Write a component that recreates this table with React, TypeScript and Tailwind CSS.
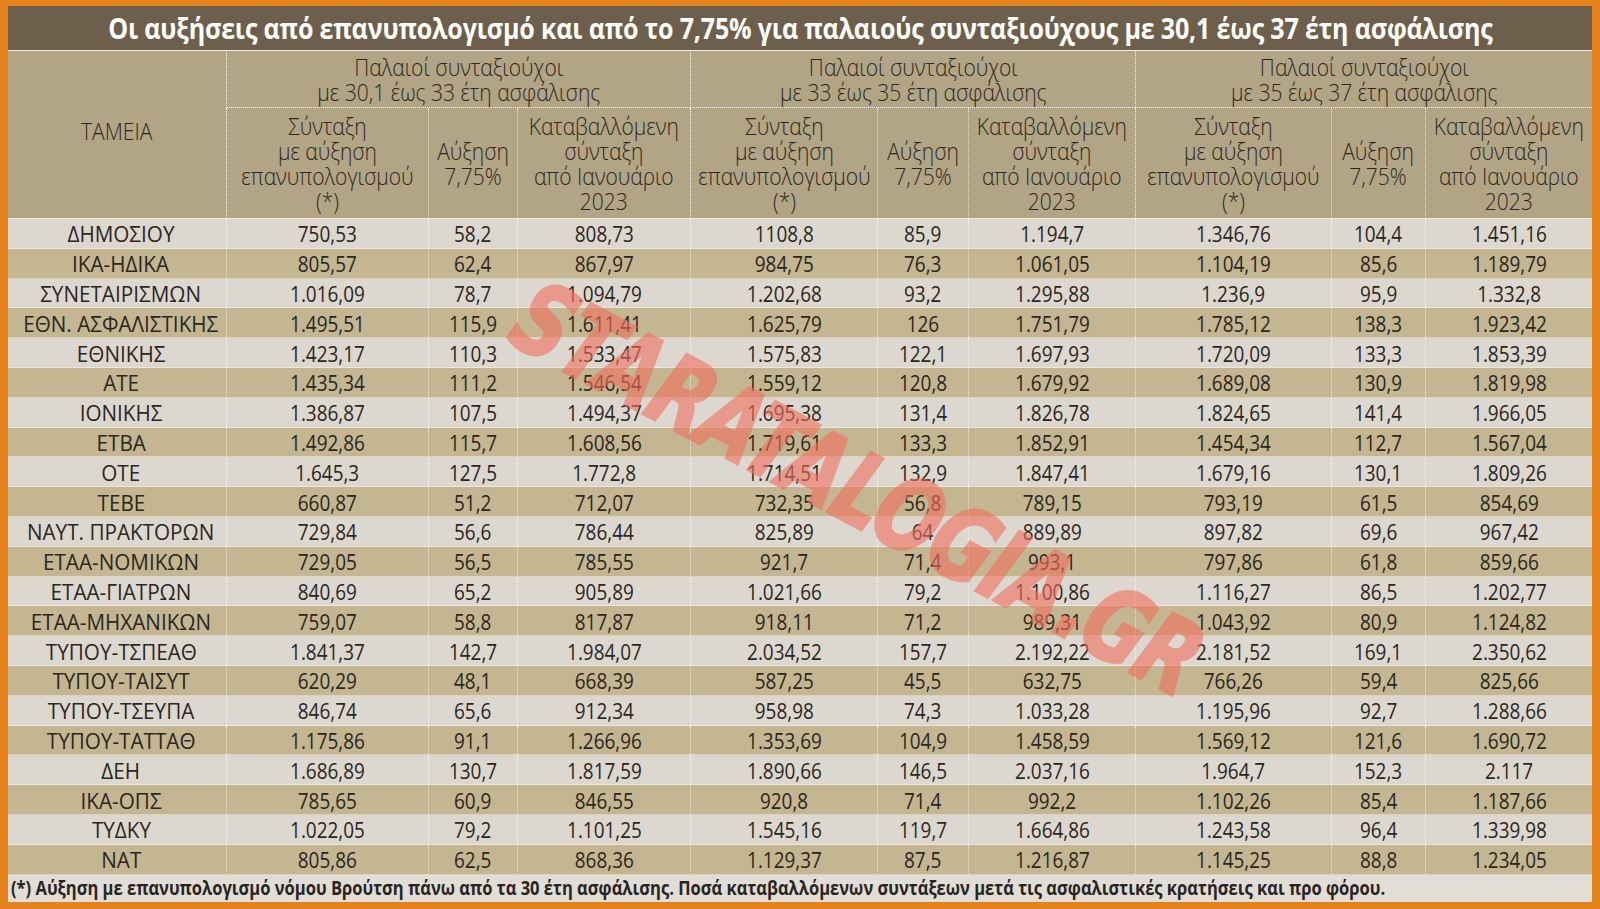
import React from 'react';

const ROWS: string[][] = [
  ['ΔΗΜΟΣΙΟΥ', '750,53', '58,2', '808,73', '1108,8', '85,9', '1.194,7', '1.346,76', '104,4', '1.451,16'],
  ['ΙΚΑ-ΗΔΙΚΑ', '805,57', '62,4', '867,97', '984,75', '76,3', '1.061,05', '1.104,19', '85,6', '1.189,79'],
  ['ΣΥΝΕΤΑΙΡΙΣΜΩΝ', '1.016,09', '78,7', '1.094,79', '1.202,68', '93,2', '1.295,88', '1.236,9', '95,9', '1.332,8'],
  ['ΕΘΝ. ΑΣΦΑΛΙΣΤΙΚΗΣ', '1.495,51', '115,9', '1.611,41', '1.625,79', '126', '1.751,79', '1.785,12', '138,3', '1.923,42'],
  ['ΕΘΝΙΚΗΣ', '1.423,17', '110,3', '1.533,47', '1.575,83', '122,1', '1.697,93', '1.720,09', '133,3', '1.853,39'],
  ['ΑΤΕ', '1.435,34', '111,2', '1.546,54', '1.559,12', '120,8', '1.679,92', '1.689,08', '130,9', '1.819,98'],
  ['ΙΟΝΙΚΗΣ', '1.386,87', '107,5', '1.494,37', '1.695,38', '131,4', '1.826,78', '1.824,65', '141,4', '1.966,05'],
  ['ΕΤΒΑ', '1.492,86', '115,7', '1.608,56', '1.719,61', '133,3', '1.852,91', '1.454,34', '112,7', '1.567,04'],
  ['ΟΤΕ', '1.645,3', '127,5', '1.772,8', '1.714,51', '132,9', '1.847,41', '1.679,16', '130,1', '1.809,26'],
  ['ΤΕΒΕ', '660,87', '51,2', '712,07', '732,35', '56,8', '789,15', '793,19', '61,5', '854,69'],
  ['ΝΑΥΤ. ΠΡΑΚΤΟΡΩΝ', '729,84', '56,6', '786,44', '825,89', '64', '889,89', '897,82', '69,6', '967,42'],
  ['ΕΤΑΑ-ΝΟΜΙΚΩΝ', '729,05', '56,5', '785,55', '921,7', '71,4', '993,1', '797,86', '61,8', '859,66'],
  ['ΕΤΑΑ-ΓΙΑΤΡΩΝ', '840,69', '65,2', '905,89', '1.021,66', '79,2', '1.100,86', '1.116,27', '86,5', '1.202,77'],
  ['ΕΤΑΑ-ΜΗΧΑΝΙΚΩΝ', '759,07', '58,8', '817,87', '918,11', '71,2', '989,31', '1.043,92', '80,9', '1.124,82'],
  ['ΤΥΠΟΥ-ΤΣΠΕΑΘ', '1.841,37', '142,7', '1.984,07', '2.034,52', '157,7', '2.192,22', '2.181,52', '169,1', '2.350,62'],
  ['ΤΥΠΟΥ-ΤΑΙΣΥΤ', '620,29', '48,1', '668,39', '587,25', '45,5', '632,75', '766,26', '59,4', '825,66'],
  ['ΤΥΠΟΥ-ΤΣΕΥΠΑ', '846,74', '65,6', '912,34', '958,98', '74,3', '1.033,28', '1.195,96', '92,7', '1.288,66'],
  ['ΤΥΠΟΥ-ΤΑΤΤΑΘ', '1.175,86', '91,1', '1.266,96', '1.353,69', '104,9', '1.458,59', '1.569,12', '121,6', '1.690,72'],
  ['ΔΕΗ', '1.686,89', '130,7', '1.817,59', '1.890,66', '146,5', '2.037,16', '1.964,7', '152,3', '2.117'],
  ['ΙΚΑ-ΟΠΣ', '785,65', '60,9', '846,55', '920,8', '71,4', '992,2', '1.102,26', '85,4', '1.187,66'],
  ['ΤΥΔΚΥ', '1.022,05', '79,2', '1.101,25', '1.545,16', '119,7', '1.664,86', '1.243,58', '96,4', '1.339,98'],
  ['ΝΑΤ', '805,86', '62,5', '868,36', '1.129,37', '87,5', '1.216,87', '1.145,25', '88,8', '1.234,05'],
];

const GROUPS = ['με 30,1 έως 33 έτη ασφάλισης', 'με 33 έως 35 έτη ασφάλισης', 'με 35 έως 37 έτη ασφάλισης'];

const COLS = 'grid grid-cols-[218px_202px_89px_173px_187px_91px_167px_196px_94px_167px]';

// condensed look: the print font is narrower than anything installed
const Narrow = ({ children, className = 'scale-x-[0.86]' }: { children: React.ReactNode; className?: string }) => (
  <span className={`inline-block whitespace-nowrap ${className}`}>{children}</span>
);

const SubHead = ({ lines, first }: { lines: string[]; first?: boolean }) => (
  <div
    className={`flex items-center justify-center text-center border-l border-dotted ${
      first ? 'border-white/90' : 'border-white/70'
    }`}
  >
    <Narrow className="scale-x-[0.875]">
      {lines.map((l, i) => (
        <span key={i} className="block leading-[25px]">
          {l}
        </span>
      ))}
    </Narrow>
  </div>
);

const App = () => {
  return (
    <div className="w-[1600px] h-[909px] bg-[#e6821c] pt-[6px] pb-[7px] px-[8px] font-['Open_Sans',sans-serif] text-[#2b2620]">
      <div className="flex flex-col h-full">
        {/* Title */}
        <div className="h-[44px] shrink-0 bg-[#6d5f4b] flex items-center justify-center">
          <Narrow className="scale-x-[0.895] text-white font-bold text-[28px] leading-none tracking-[-0.2px]">
            Οι αυξήσεις από επανυπολογισμό και από το 7,75% για παλαιούς συνταξιούχους με 30,1 έως 37 έτη ασφάλισης
          </Narrow>
        </div>

        {/* Header */}
        <div className={`${COLS} grid-rows-[57px_110px] bg-[#b1a585] text-[#2f271d] font-light text-[24px] border-t border-white/80`}>
          <div className="row-span-2 flex items-center justify-center">
            <Narrow className="scale-x-[0.875] pb-2">ΤΑΜΕΙΑ</Narrow>
          </div>
          {GROUPS.map((g) => (
            <div
              key={g}
              className="col-span-3 flex items-center justify-center text-center border-l border-b border-dotted border-white/90"
            >
              <Narrow className="scale-x-[0.875]">
                <span className="block leading-[25px]">Παλαιοί συνταξιούχοι</span>
                <span className="block leading-[25px]">{g}</span>
              </Narrow>
            </div>
          ))}
          {[0, 1, 2].map((i) => (
            <React.Fragment key={i}>
              <SubHead first lines={['Σύνταξη', 'με αύξηση', 'επανυπολογισμού', '(*)']} />
              <SubHead lines={['Αύξηση', '7,75%']} />
              <SubHead lines={['Καταβαλλόμενη', 'σύνταξη', 'από Ιανουάριο', '2023']} />
            </React.Fragment>
          ))}
        </div>

        {/* Body */}
        <div className="relative border-t border-white/80">
          {ROWS.map((row, r) => (
            <div
              key={row[0]}
              className={`${COLS} h-[29.8px] text-[22px] border-b border-white/40 ${
                r % 2 === 0 ? 'bg-[#dcd8d0]' : 'bg-[#c3b691]'
              }`}
            >
              {row.map((cell, c) => (
                <div
                  key={c}
                  className={`flex items-center justify-center ${
                    c === 0 ? 'pl-2' : 'border-l border-dotted border-white/70'
                  }`}
                >
                  <Narrow className={`leading-none ${c === 0 ? 'scale-x-[0.94]' : 'scale-x-[0.86]'}`}>{cell}</Narrow>
                </div>
              ))}
            </div>
          ))}

          {/* watermark */}
          <div className="pointer-events-none absolute left-[849px] top-[270px] -translate-x-1/2 -translate-y-1/2 rotate-[28deg] scale-x-[0.76] whitespace-nowrap font-['DejaVu_Sans',sans-serif] font-bold italic text-[100px] leading-none tracking-[-2px] text-[#f2705f] [-webkit-text-stroke:3px_#f2705f] opacity-60">
            STARATALOGIA.GR
          </div>
        </div>

        {/* Footer */}
        <div className="flex-1 bg-[#e1ded8] flex items-center pl-[3px]">
          <Narrow className="scale-x-[0.87] origin-left font-bold text-[19px] leading-none text-[#2a2420]">
            (*) Αύξηση με επανυπολογισμό νόμου Βρούτση πάνω από τα 30 έτη ασφάλισης. Ποσά καταβαλλόμενων συντάξεων μετά τις ασφαλιστικές κρατήσεις και προ φόρου.
          </Narrow>
        </div>
      </div>
    </div>
  );
};

export default App;
